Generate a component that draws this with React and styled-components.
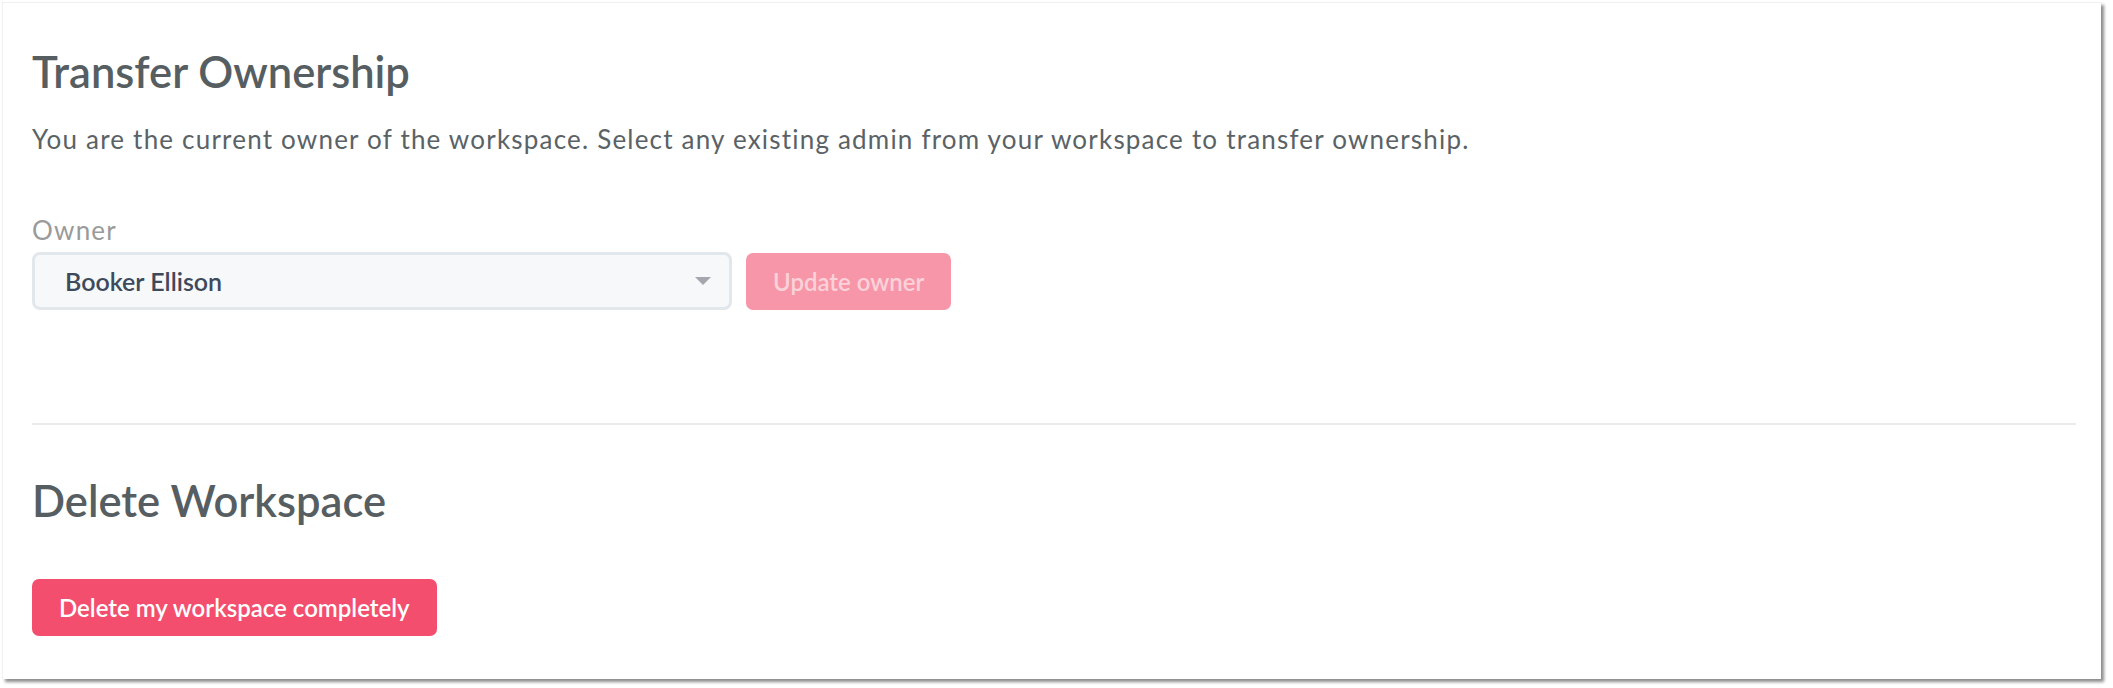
import styled, { createGlobalStyle } from "styled-components";

const GlobalStyle = createGlobalStyle`
  html, body {
    margin: 0;
    padding: 0;
    background: #ffffff;
  }
  body {
    font-family: Lato, "Open Sans", "Liberation Sans", sans-serif;
  }
`;

function Caret() {
  return (
    <svg width="16" height="8" viewBox="0 0 16 8">
      <path d="M0 0 L16 0 L8 8 Z" fill="#a4a8ad" />
    </svg>
  );
}

export default function App() {
  return (
    <>
      <GlobalStyle />
      <Page>
        <Card>
          <Section>
            <Title>Transfer Ownership</Title>
            <Description>
              You are the current owner of the workspace. Select any existing
              admin from your workspace to transfer ownership.
            </Description>
            <FieldLabel>Owner</FieldLabel>
            <FieldRow>
              <SelectBox>
                <SelectValue>Booker Ellison</SelectValue>
                <Caret />
              </SelectBox>
              <Button $disabled>Update owner</Button>
            </FieldRow>
          </Section>
          <Divider />
          <Section $danger>
            <Title>Delete Workspace</Title>
            <Button>Delete my workspace completely</Button>
          </Section>
        </Card>
      </Page>
    </>
  );
}

const Page = styled.div`
  padding: 2px 12px 10px 2px;
`;

const Card = styled.div`
  background: #ffffff;
  border-top: 1px solid #f0f0f0;
  border-left: 1px solid #f0f0f0;
  box-shadow: 3px 3px 3px rgba(0, 0, 0, 0.45);
  padding: 42px 25px 43px 29px;
`;

const Section = styled.div`
  display: flex;
  flex-direction: column;
  align-items: flex-start;
  padding-bottom: ${(p) => (p.$danger ? "0" : "113px")};
  ${(p) => p.$danger && "padding-top: 49px; gap: 53px;"}
`;

const Title = styled.h2`
  margin: 0;
  font-size: 43.5px;
  line-height: 52px;
  font-weight: 600;
  color: #565e62;
  letter-spacing: 0;
`;

const Description = styled.p`
  margin: 26px 0 0;
  font-size: 26px;
  line-height: 32px;
  font-weight: 400;
  letter-spacing: 1.2px;
  color: #5a6266;
`;

const FieldLabel = styled.label`
  margin-top: 60px;
  font-size: 26px;
  line-height: 30px;
  letter-spacing: 1.2px;
  color: #9a9a9a;
`;

const FieldRow = styled.div`
  display: flex;
  align-items: center;
  gap: 14px;
  margin-top: 7px;
`;

const SelectBox = styled.div`
  box-sizing: border-box;
  width: 700px;
  height: 58px;
  display: flex;
  align-items: center;
  justify-content: space-between;
  padding: 0 18px 0 30px;
  background: #f6f8fa;
  border: 3px solid #e2e7ec;
  border-radius: 8px;
`;

const SelectValue = styled.span`
  font-size: 25px;
  font-weight: 600;
  color: #3e4a5b;
`;

const Button = styled.button`
  box-sizing: border-box;
  height: 57px;
  padding: 0 27px;
  border: none;
  border-radius: 7px;
  font-family: inherit;
  font-size: 24px;
  font-weight: 600;
  background: ${(p) => (p.$disabled ? "#f796a8" : "#f44e6e")};
  color: ${(p) => (p.$disabled ? "#fbd2da" : "#ffffff")};
  cursor: ${(p) => (p.$disabled ? "default" : "pointer")};
`;

const Divider = styled.hr`
  margin: 0;
  border: none;
  height: 2px;
  background: #ebebeb;
`;
